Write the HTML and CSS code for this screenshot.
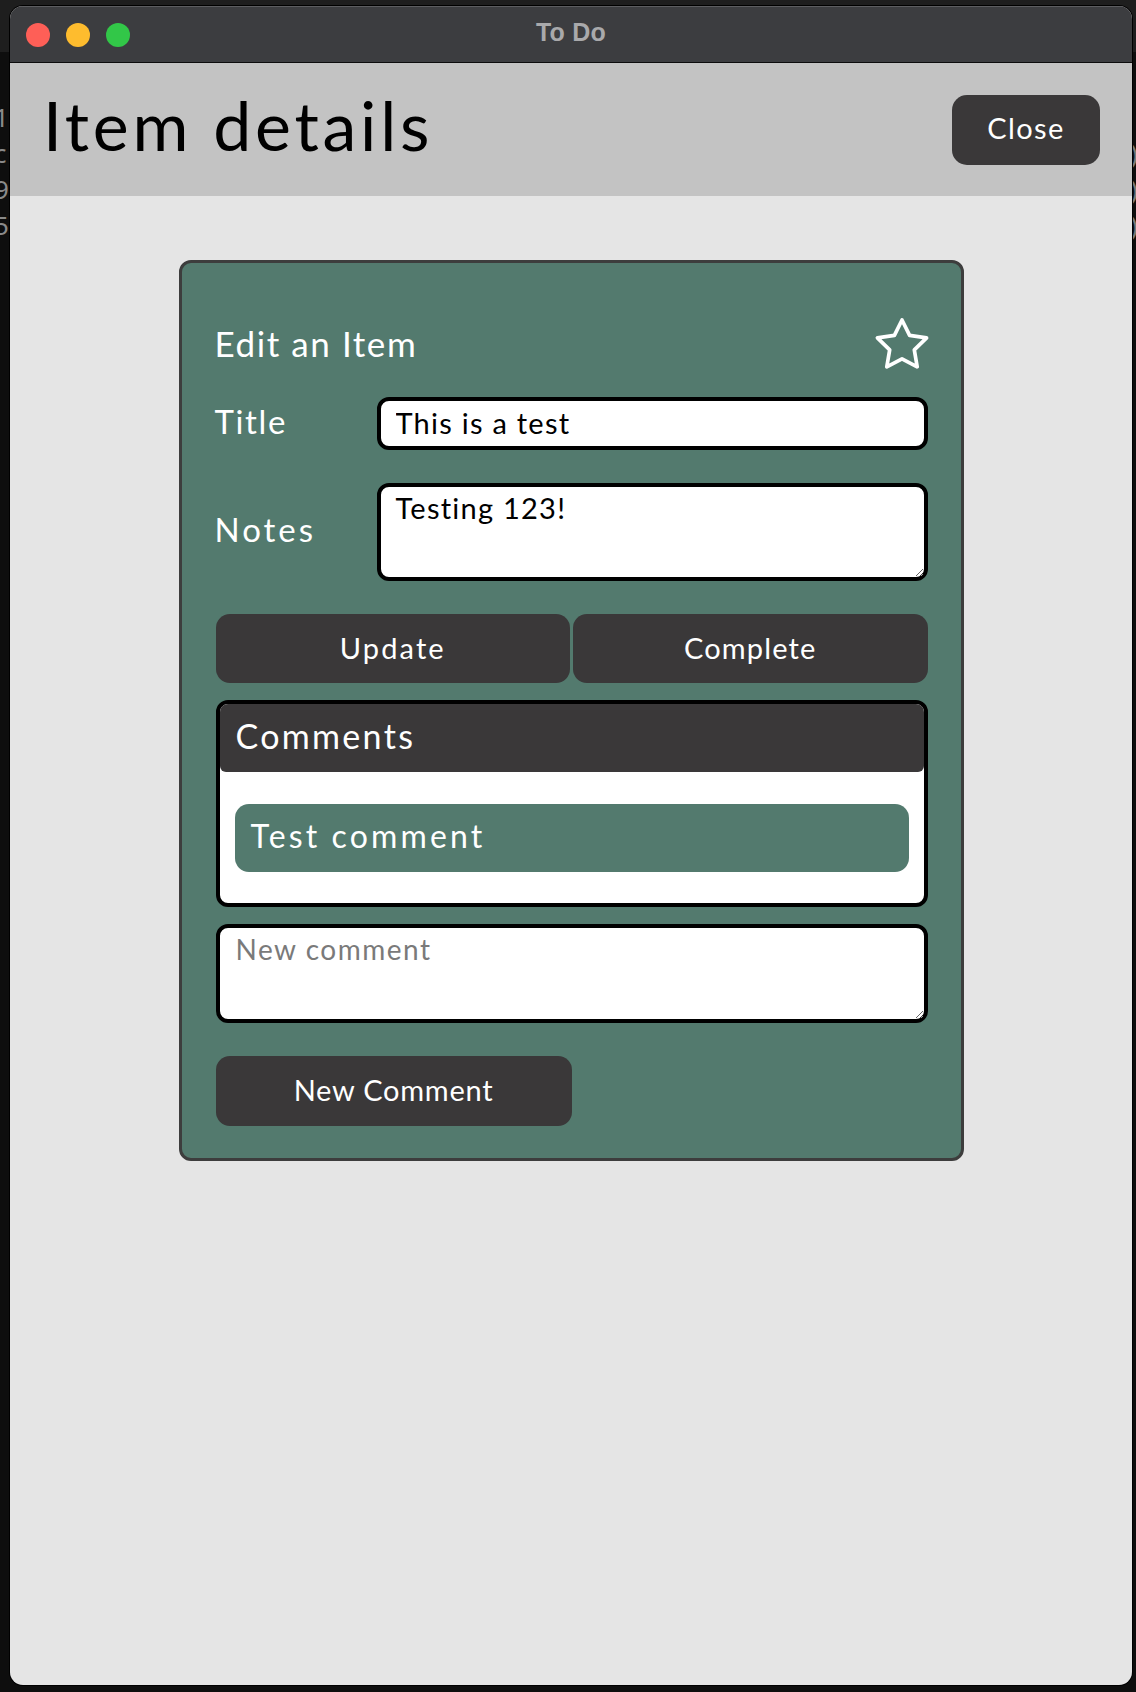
FILE: index.html
```html
<!DOCTYPE html>
<html lang="en">
<head>
<meta charset="utf-8">
<title>To Do</title>
<link rel="stylesheet" href="styles.css">
</head>
<body>
<div class="desktop">
  <div class="backdrop">
    <div class="backdrop-top"></div>
    <div class="frag frag-left">
      <span>1</span><span>c</span><span>9</span><span>5</span>
    </div>
    <div class="frag frag-right">
      <span>)</span><span>)</span><span>)</span>
    </div>
  </div>
  <div class="window">
    <div class="titlebar">
      <div class="lights">
        <span class="light red"></span>
        <span class="light yellow"></span>
        <span class="light green"></span>
      </div>
      <div class="wintitle">To Do</div>
      <div></div>
    </div>
    <header class="app-header">
      <h1 class="page-title">Item details</h1>
      <button class="btn btn-close">Close</button>
    </header>
    <main class="content">
      <section class="card">
        <div class="card-head">
          <h2 class="card-title">Edit an Item</h2>
          <svg class="star" viewBox="2 2 20 19.1" width="50" height="47" aria-hidden="true">
            <path d="M12 2l3.09 6.26L22 9.27l-5 4.87 1.18 6.88L12 17.77l-6.18 3.25L7 14.14 2 9.27l6.91-1.01L12 2z" fill="none" stroke="#ffffff" stroke-width="1.5" stroke-linejoin="round" stroke-linecap="round"/>
          </svg>
        </div>
        <div class="field">
          <label class="field-label label-title" for="title">Title</label>
          <input class="text-input" id="title" type="text" value="This is a test">
        </div>
        <div class="field">
          <label class="field-label label-notes" for="notes">Notes</label>
          <textarea class="text-area notes" id="notes">Testing 123!</textarea>
        </div>
        <div class="actions">
          <button class="btn btn-action btn-update">Update</button>
          <button class="btn btn-action btn-complete">Complete</button>
        </div>
        <div class="comments">
          <div class="comments-head">Comments</div>
          <div class="comments-body">
            <div class="comment">Test comment</div>
          </div>
        </div>
        <textarea class="text-area new-comment" placeholder="New comment"></textarea>
        <div class="new-row">
          <button class="btn btn-action btn-new">New Comment</button>
        </div>
      </section>
    </main>
  </div>
</div>
</body>
</html>
```
FILE: styles.css
```css
* { box-sizing: border-box; }

html, body {
  margin: 0;
  padding: 0;
  background: #0e0e0e;
}

body {
  font-family: "Lato", "Noto Sans", sans-serif;
  width: 1136px;
  height: 1692px;
  overflow: hidden;
}

.desktop {
  position: relative;
  width: 1136px;
  height: 1692px;
  padding: 6px 4px 0 10px;
}

.backdrop {
  position: absolute;
  inset: 0;
  z-index: 0;
}

.backdrop-top {
  height: 52px;
  background: #1e1e1e;
}

.frag {
  position: absolute;
  top: 99px;
  display: flex;
  flex-direction: column;
  font-family: "Noto Sans", sans-serif;
  font-size: 26px;
  line-height: 36px;
  color: #8a8a8a;
}

.frag-left { left: -6px; }
.frag-right { left: 1130px; color: #7a7a7a; top: 135px; }

.window {
  position: relative;
  z-index: 1;
  width: 1122px;
  height: 1679px;
  display: flex;
  flex-direction: column;
  border-radius: 13px;
  overflow: hidden;
  background: #e5e5e5;
  box-shadow: 0 0 0 1px #000;
}

.titlebar {
  height: 57px;
  flex: none;
  display: grid;
  grid-template-columns: 1fr auto 1fr;
  align-items: center;
  background: #3c3d40;
  border-top: 1px solid #5c5d60;
  border-bottom: 1px solid #0c0c0c;
}

.lights {
  display: flex;
  gap: 16px;
  padding-left: 16px;
}

.light {
  width: 24px;
  height: 24px;
  border-radius: 50%;
}

.light.red { background: #fe5f57; }
.light.yellow { background: #febc2e; }
.light.green { background: #32c748; }

.wintitle {
  font-family: "Liberation Sans", Arial, sans-serif;
  font-weight: 700;
  font-size: 25px;
  color: #a9a9ab;
  margin-top: -5px;
  letter-spacing: 0.01em;
}

.app-header {
  height: 133px;
  flex: none;
  display: flex;
  align-items: center;
  justify-content: space-between;
  background: #c3c3c3;
  padding: 0 32px 0 33px;
}

.page-title {
  margin: -10px 0 0 0;
  font-size: 68px;
  font-weight: 400;
  color: #000;
  letter-spacing: 0.055em;
}

.btn {
  font-family: "Lato", "Noto Sans", sans-serif;
  border: none;
  background: #3a3839;
  color: #fff;
  cursor: pointer;
}

.btn-close {
  width: 148px;
  height: 70px;
  border-radius: 15px;
  font-size: 29px;
  letter-spacing: 0.047em;
  padding: 0 0 4px 0;
}

.content {
  flex: 1;
  padding-top: 64px;
  display: flex;
  justify-content: center;
  align-items: flex-start;
}

.card {
  width: 785px;
  background: #537a6e;
  border: 3px solid #3d3d3d;
  border-radius: 12px;
  padding: 57px 33px 32px 34px;
  display: flex;
  flex-direction: column;
}

.card-head {
  display: flex;
  align-items: center;
  justify-content: space-between;
  height: 47px;
}

.card-title {
  margin: -2px 0 0 -1px;
  font-size: 35px;
  font-weight: 400;
  color: #fff;
  letter-spacing: 0.045em;
}

.star {
  overflow: visible;
  margin-right: 1px;
}

.field {
  display: flex;
  align-items: center;
  margin-top: 30px;
}

.field + .field { margin-top: 33px; }

.field-label {
  width: 162px;
  flex: none;
  font-size: 33px;
  color: #fff;
  margin-left: -1px;
  padding-bottom: 6px;
}

.label-title { letter-spacing: 0.05em; }
.label-notes { letter-spacing: 0.09em; }

.text-input,
.text-area {
  font-family: "Lato", "Noto Sans", sans-serif;
  font-size: 29px;
  color: #000;
  background: #fff;
  border: 4px solid #000;
  border-radius: 12px;
  outline: none;
  letter-spacing: 0.043em;
}

.text-input {
  flex: 1;
  height: 53px;
  padding: 0 14px 3px 15px;
}

.text-area {
  display: block;
  resize: vertical;
  margin: 0;
}

.notes {
  flex: 1;
  height: 98px;
  padding: 4px 14px 0 15px;
  line-height: 1.2;
}

.actions {
  display: flex;
  gap: 3px;
  margin-top: 33px;
}

.btn-action {
  flex: 1;
  height: 69px;
  border-radius: 14px;
  font-size: 29px;
  padding: 0 0 3px 0;
}

.btn-update { letter-spacing: 0.074em; }
.btn-complete { letter-spacing: 0.04em; }

.comments {
  margin-top: 17px;
  background: #fff;
  border: 4px solid #000;
  border-radius: 12px;
  overflow: hidden;
}

.comments-head {
  height: 68px;
  background: #3a3839;
  color: #fff;
  font-size: 34px;
  padding: 0 0 6px 16px;
  display: flex;
  align-items: center;
  border-radius: 0 0 6px 6px;
  letter-spacing: 0.068em;
}

.comments-body {
  padding: 32px 15px 31px 15px;
}

.comment {
  height: 68px;
  background: #537a6e;
  border-radius: 14px;
  color: #fff;
  font-size: 32px;
  display: flex;
  align-items: center;
  padding: 0 16px 6px 16px;
  letter-spacing: 0.098em;
}

.new-comment {
  margin-top: 17px;
  width: 100%;
  height: 99px;
  padding: 5px 16px 0 16px;
  line-height: 1.2;
  font-size: 28px;
  letter-spacing: 0.054em;
}

.new-comment::placeholder {
  color: #7a7a7a;
}

.new-row {
  display: flex;
  margin-top: 33px;
}

.new-row .btn-action {
  flex: none;
  width: 356px;
  height: 70px;
}

.btn-new { letter-spacing: 0.026em; }
```
